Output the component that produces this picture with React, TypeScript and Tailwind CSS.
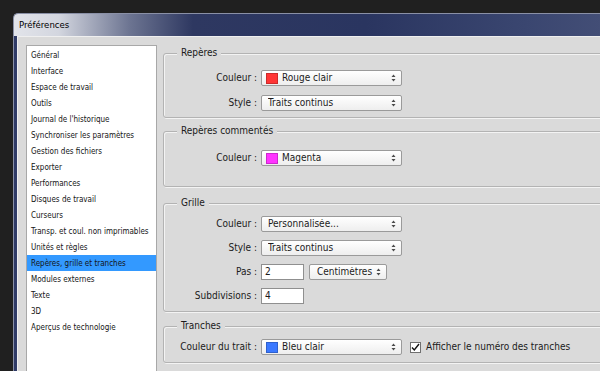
import React from 'react';

const categories = [
  'Général',
  'Interface',
  'Espace de travail',
  'Outils',
  "Journal de l'historique",
  'Synchroniser les paramètres',
  'Gestion des fichiers',
  'Exporter',
  'Performances',
  'Disques de travail',
  'Curseurs',
  'Transp. et coul. non imprimables',
  'Unités et règles',
  'Repères, grille et tranches',
  'Modules externes',
  'Texte',
  '3D',
  'Aperçus de technologie',
];

function Arrows() {
  return (
    <svg width="5" height="8" viewBox="0 0 5 8" className="shrink-0">
      <path d="M2.5 0.5 L4.5 3 H0.5 Z M0.5 5 H4.5 L2.5 7.5 Z" fill="#4a4a4a" />
    </svg>
  );
}

function Select({ label, swatch, wide = true }: { label: string; swatch?: string; wide?: boolean }) {
  return (
    <div
      className={`flex h-4 items-center rounded-[2px] border border-[#9a9a9a] bg-gradient-to-b from-white to-[#eeeeee] pr-[5px] ${
        wide ? 'w-[141px]' : 'w-[78px]'
      } ${swatch ? 'pl-[4px]' : wide ? 'pl-[6px]' : 'pl-[7px]'}`}
    >
      {swatch && (
        <span className="mr-[4px] h-[11px] w-[12px] shrink-0 border border-black/20" style={{ background: swatch }} />
      )}
      <span className="flex-1 truncate leading-none text-[#1b1b1b]">{label}</span>
      <Arrows />
    </div>
  );
}

function Input({ value }: { value: string }) {
  return (
    <div className="flex h-4 w-[43px] items-center border border-[#8f8f8f] bg-white pl-[3px] leading-none text-[#1b1b1b]">
      {value}
    </div>
  );
}

function Row({ label, children }: { label: string; children: React.ReactNode }) {
  return (
    <div className="flex items-center">
      <div className="w-[93px] text-right leading-none text-[#1b1b1b]">{label}</div>
      <div className="ml-[4px] flex items-center">{children}</div>
    </div>
  );
}

function Group({ title, className, children }: { title: string; className: string; children: React.ReactNode }) {
  return (
    <fieldset
      className={`rounded-[3px] border border-[#b3b3b3] shadow-[inset_1px_1px_0_#f3f3f3,1px_1px_0_#f3f3f3] ${className}`}
    >
      <legend className="ml-[13px] bg-[#dadada] px-[4px] text-[10px] leading-[12px] text-[#1b1b1b]">{title}</legend>
      {children}
    </fieldset>
  );
}

export default function App() {
  return (
    <div className="h-[371px] w-[600px] overflow-hidden bg-[#202020] pl-[13px] pt-[13px] font-['DejaVu_Sans_Condensed','Liberation_Sans',sans-serif] text-[10px]">
      <div className="flex h-[400px] w-[640px] flex-col overflow-hidden rounded-tl-[5px] border-l border-t border-[#8a90a6] bg-[#2f3a66]">
        {/* Title bar */}
        <div className="flex h-[22px] items-center bg-[linear-gradient(90deg,#e2e4ea_0%,#d3d6df_7%,#6d7592_18%,#2e3861_28%,#2a3560_55%,#3a4670_80%,#434e76_92%,#3a4570_100%)] pl-[5px]">
          <span className="text-[9.5px] text-black">Préférences</span>
        </div>

        {/* Body */}
        <div className="flex flex-1 pl-[3px]">
          <div className="flex flex-1 border-l border-t border-[#efefef] bg-[#dadada] pl-[8px] pt-[8px]">
            {/* Category list */}
            <div className="h-[340px] w-[131px] shrink-0 border border-[#a8a8a8] bg-white pt-[1px]">
              {categories.map((c) => (
                <div
                  key={c}
                  className={`flex h-4 items-center px-[4px] pt-[1px] text-[8px] text-[#141414] ${
                    c === 'Repères, grille et tranches' ? 'bg-[#3399ff]' : ''
                  }`}
                >
                  {c}
                </div>
              ))}
            </div>

            {/* Settings */}
            <div className="ml-[6px] flex w-[470px] flex-col pt-[2px]">
              <Group title="Repères" className="flex flex-col gap-[9px] pb-[6px] pt-[11px]">
                <Row label="Couleur :">
                  <Select label="Rouge clair" swatch="#ff3535" />
                </Row>
                <Row label="Style :">
                  <Select label="Traits continus" />
                </Row>
              </Group>

              <Group title="Repères commentés" className="mt-[7px] pb-[20px] pt-[13px]">
                <Row label="Couleur :">
                  <Select label="Magenta" swatch="#ff33ff" />
                </Row>
              </Group>

              <Group title="Grille" className="mt-[10px] flex flex-col gap-[8px] pb-[7px] pt-[7px]">
                <Row label="Couleur :">
                  <Select label="Personnalisée..." />
                </Row>
                <Row label="Style :">
                  <Select label="Traits continus" />
                </Row>
                <Row label="Pas :">
                  <Input value="2" />
                  <div className="ml-[5px]">
                    <Select label="Centimètres" wide={false} />
                  </div>
                </Row>
                <Row label="Subdivisions :">
                  <Input value="4" />
                </Row>
              </Group>

              <Group title="Tranches" className="mt-[8px] pb-[7px] pt-[7px]">
                <Row label="Couleur du trait :">
                  <Select label="Bleu clair" swatch="#3a78ff" />
                  <div className="ml-[8px] flex items-center">
                    <span className="flex h-[11px] w-[11px] items-center justify-center border border-[#707070] bg-white">
                      <svg width="9" height="9" viewBox="0 0 9 9">
                        <path d="M1 4.5 L3.3 7 L8 1" fill="none" stroke="#111" strokeWidth="1.4" />
                      </svg>
                    </span>
                    <span className="ml-[5px] leading-none text-[#1b1b1b]">Afficher le numéro des tranches</span>
                  </div>
                </Row>
              </Group>
            </div>
          </div>
        </div>
      </div>
    </div>
  );
}
